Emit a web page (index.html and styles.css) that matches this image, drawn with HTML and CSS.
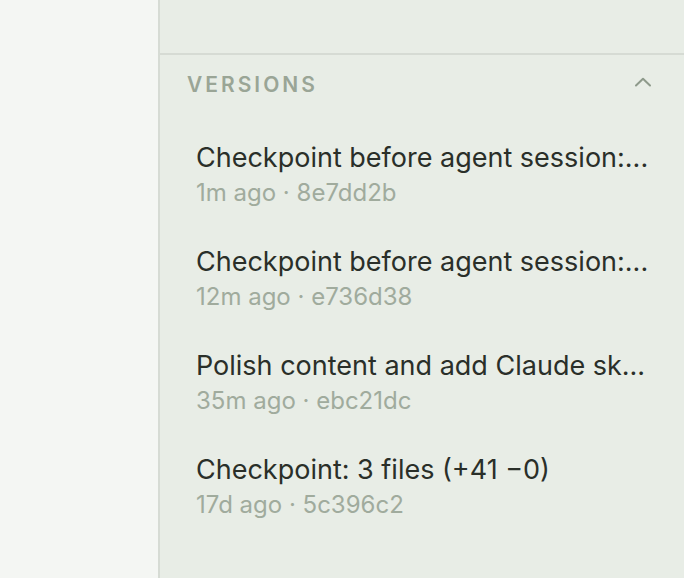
FILE: index.html
```html
<!DOCTYPE html>
<html lang="en">
<head>
    <meta charset="UTF-8">
    <meta name="viewport" content="width=device-width, initial-scale=1.0">
    <title>Versions</title>
    <link rel="stylesheet" href="styles.css">
</head>
<body>

    <div class="layout">
        <div class="editor"></div>

        <aside class="sidebar">
            <div class="sidebar-top"></div>

            <section class="versions">
                <div class="versions-header">
                    <h2>Versions</h2>
                    <svg class="chevron" width="18" height="10" viewBox="0 0 18 10" aria-hidden="true">
                        <path d="M2 8.5 L9 1.8 L16 8.5" fill="none" stroke="currentColor" stroke-width="2" stroke-linecap="round" stroke-linejoin="round"/>
                    </svg>
                </div>

                <ul class="version-list">
                    <li class="version">
                        <div class="version-title">Checkpoint before agent session:...</div>
                        <div class="version-meta">1m ago · 8e7dd2b</div>
                    </li>
                    <li class="version">
                        <div class="version-title">Checkpoint before agent session:...</div>
                        <div class="version-meta">12m ago · e736d38</div>
                    </li>
                    <li class="version">
                        <div class="version-title">Polish content and add Claude sk...</div>
                        <div class="version-meta">35m ago · ebc21dc</div>
                    </li>
                    <li class="version">
                        <div class="version-title">Checkpoint: 3 files (+41 &minus;0)</div>
                        <div class="version-meta">17d ago · 5c396c2</div>
                    </li>
                </ul>
            </section>
        </aside>
    </div>

</body>
</html>
```

FILE: styles.css
```css
html, body {
    margin: 0;
    padding: 0;
    height: 100%;
}
body {
    font-family: Inter, "Noto Sans", sans-serif;
    background-color: #f4f6f3;
    color: #2a2f29;
}
.layout {
    display: flex;
    height: 100vh;
}
.editor {
    width: 158px;
    flex-shrink: 0;
    background-color: #f4f6f3;
}
.sidebar {
    flex: 1;
    min-width: 0;
    background-color: #e8ede6;
    border-left: 2px solid #d6dbd4;
    display: flex;
    flex-direction: column;
}
.sidebar-top {
    height: 53px;
    border-bottom: 2px solid #d6dbd4;
}
.versions {
    padding: 0 32px 0 27px;
}
.versions-header {
    display: flex;
    align-items: center;
    justify-content: space-between;
    height: 58px;
}
.versions-header h2 {
    margin: 0;
    font-size: 21px;
    font-weight: 600;
    letter-spacing: 3px;
    text-transform: uppercase;
    color: #9aa596;
}
.chevron {
    color: #8e9a8b;
    margin-top: -4px;
}
.version-list {
    list-style: none;
    margin: 0;
    padding: 10px 0 0 9px;
}
.version {
    padding: 17px 0;
}
.version-title {
    font-size: 27px;
    line-height: 35px;
    white-space: nowrap;
    color: #2a2f29;
}
.version-meta {
    font-size: 24px;
    line-height: 35px;
    color: #a0ab9d;
}
```
